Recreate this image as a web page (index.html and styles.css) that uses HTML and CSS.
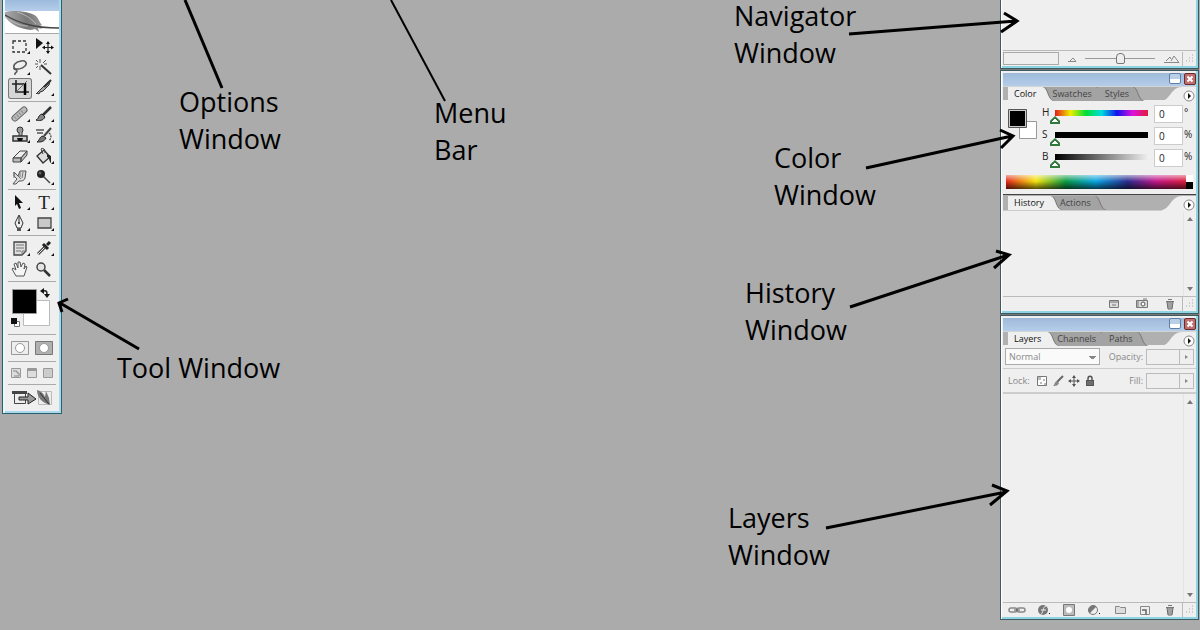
FILE: index.html
```html
<!DOCTYPE html>
<html lang="en">
<head>
<meta charset="utf-8">
<title>Photoshop workspace</title>
<link rel="stylesheet" href="styles.css">
</head>
<body>
<main class="desktop">
  <section class="toolbox" aria-label="Tool window">
    <div class="toolbox-title"></div>
    <svg class="feather" viewBox="0 0 54 22" aria-hidden="true">
      <defs><linearGradient id="fg" x1="0" x2="1"><stop offset="0" stop-color="#aaa"/><stop offset=".6" stop-color="#777"/><stop offset="1" stop-color="#999"/></linearGradient></defs>
      <path d="M0 1C8 -1 24 0 31 5c3 3 3 6 6 9l-2 1 2 3-4-1 1 4-4-3-4 1C16 18 7 15 0 6z" fill="url(#fg)"/>
      <path d="M0 4C14 12 28 17 54 17" fill="none" stroke="#444" stroke-width="1.300"/>
      <path d="M12 1c7 2 14 6 19 12M5 9c6 4 12 6 18 6" fill="none" stroke="#ccc" stroke-width=".7"/>
    </svg>
    <div class="tools">
      <button aria-label="Marquee"><svg viewBox="0 0 24 21"><path d="M5 5h13v11H5z" fill="none" stroke="#333" stroke-width="1.3" stroke-dasharray="3 2"/><path class="k" d="M22 15v3h-3z"/></svg></button>
      <button aria-label="Move"><svg viewBox="0 0 24 21"><path class="k" d="M4 2v11l7-6z"/><path d="M16 6v11M11 11.500h10" stroke="#222" stroke-width="1.200"/><path class="k" d="M16 5l2 3h-4zM16 18l2-3h-4zM10 11.500l3-2v4zM22 11.500l-3-2v4z"/></svg></button>
      <button aria-label="Lasso"><svg viewBox="0 0 24 21"><path d="M7 12c-3-3 0-7 6-8 4-1 7 2 4 5-3 3-8 4-11 2-1 2 3 1 3 3s-3 1-2 4" fill="none" stroke="#555" stroke-width="1.500"/><path class="k" d="M22 15v3h-3z"/></svg></button>
      <button aria-label="Magic wand"><svg viewBox="0 0 24 21"><path d="M9 8l10 9" stroke="#333" stroke-width="2"/><path d="M8 2v4M8 9v4M3 7h3M11 6l3-3M4 3l2 2M4 11l2-2M12 7h3" stroke="#555"/></svg></button>
      <button class="selected" aria-label="Crop"><svg viewBox="0 0 24 21"><path d="M4 6h13v11M8 2v12h13" fill="none" stroke="#222" stroke-width="1.600"/><path d="M17 5v12" stroke="#000" stroke-width="2.500"/><path d="M7 15L19 3" stroke="#666"/></svg></button>
      <button aria-label="Slice"><svg viewBox="0 0 24 21"><path d="M4 16L15 5l3-2-1 4-6 6-3 1-1 2-2-1z" fill="#aaa" stroke="#333"/><path d="M12 9l7-7" stroke="#333" stroke-width="2"/><path class="k" d="M22 15v3h-3z"/></svg></button>
    </div>
    <div class="tools">
      <button aria-label="Healing brush"><svg viewBox="0 0 24 21"><path d="M7 14l9-8" stroke="#666" stroke-width="7" stroke-linecap="round"/><path d="M7 14l9-8" stroke="#bbb" stroke-width="5" stroke-linecap="round"/><path d="M7 14l9-8" stroke="#888" stroke-width="3" stroke-dasharray="1 2"/><path class="k" d="M22 15v3h-3z"/></svg></button>
      <button aria-label="Brush"><svg viewBox="0 0 24 21"><path d="M11 11l8-8" stroke="#333" stroke-width="2.500"/><path d="M4 16c3-1 2-5 6-6l3 3c-2 4-6 4-9 3z" fill="#888" stroke="#222"/><path class="k" d="M22 15v3h-3z"/></svg></button>
      <button aria-label="Clone stamp"><svg viewBox="0 0 24 21"><circle cx="12" cy="5" r="3" fill="#999" stroke="#333"/><path d="M11 7v4h3V7" fill="#aaa" stroke="#444"/><path d="M5 11h14v5H5z" fill="#ccc" stroke="#333" stroke-width="1.500"/><path class="k" d="M9 13h6l-1 3h-4zM22 15v3h-3z"/></svg></button>
      <button aria-label="History brush"><svg viewBox="0 0 24 21"><path d="M12 11l7-8" stroke="#444" stroke-width="2"/><path d="M5 17c3-2 2-5 6-6l3 2c-2 4-5 4-9 4z" fill="#777" stroke="#222"/><path d="M4 5h8M5 8h6" fill="none" stroke="#555" stroke-width="1.300"/><path d="M17 8c3 2 2 6 0 8" fill="none" stroke="#444" stroke-width="1.300" stroke-dasharray="2 1"/><path class="k" d="M22 15v3h-3z"/></svg></button>
      <button aria-label="Eraser"><svg viewBox="0 0 24 21"><path d="M5 12l7-7h7l-6 7z" fill="#eee" stroke="#444"/><path d="M5 12h8v4H5zM13 12l6-7v4l-6 7z" fill="#bbb" stroke="#444"/><path class="k" d="M22 15v3h-3z"/></svg></button>
      <button aria-label="Paint bucket"><svg viewBox="0 0 24 21"><path d="M5 10l7-6 6 7-7 6z" fill="#ddd" stroke="#333" stroke-width="1.300"/><path d="M11 8L9 3c3-2 4 1 4 4" fill="none" stroke="#444"/><path d="M15 8l4 2v7c-2-1-1-5-4-6z" fill="#222"/><path class="k" d="M22 15v3h-3z"/></svg></button>
      <button aria-label="Smudge"><svg viewBox="0 0 24 21"><path d="M5 17l4-5-3-3V5l4 4 2-5h6l-1 7c-1 3-3 3-6 3l-3 3z" fill="#ddd" stroke="#555"/><path d="M10 9l3 3M12 5v5M15 5l-1 6M6 5v6" fill="none" stroke="#777"/><path class="k" d="M22 15v3h-3z"/></svg></button>
      <button aria-label="Burn"><svg viewBox="0 0 24 21"><path d="M10 8l8 8" stroke="#444" stroke-width="1.500"/><circle cx="9" cy="7" r="4" fill="#222"/><circle cx="8" cy="6" r="1.500" fill="#666"/><path class="k" d="M22 15v3h-3z"/></svg></button>
    </div>
    <div class="tools">
      <button aria-label="Path selection"><svg viewBox="0 0 24 21"><path class="k" d="M7 3l8 8h-4l2 5-2 1-2-5-2 2z"/><path class="k" d="M22 15v3h-3z"/></svg></button>
      <button aria-label="Type"><span class="type">T</span><svg class="over" viewBox="0 0 24 21"><path class="k" d="M22 15v3h-3z"/></svg></button>
      <button aria-label="Pen"><svg viewBox="0 0 24 21"><path d="M11 2l4 8-2 5H9l-2-5z" fill="#eee" stroke="#333"/><path d="M11 3v7" stroke="#333"/><circle cx="11" cy="10" r="1" fill="#222"/><path d="M9 15h4v3H9z" fill="#555"/><path class="k" d="M22 15v3h-3z"/></svg></button>
      <button aria-label="Rectangle"><svg viewBox="0 0 24 21"><path d="M6 5h13v10H6z" fill="#c9c9c9" stroke="#444" stroke-width="1.300"/><path class="k" d="M22 15v3h-3z"/></svg></button>
    </div>
    <div class="tools">
      <button aria-label="Notes"><svg viewBox="0 0 24 21"><path d="M6 4h12v9l-4 4H6z" fill="#ddd" stroke="#444" stroke-width="1.300"/><path d="M8 7h8M8 10h8M8 13h5M14 17v-4h4" fill="none" stroke="#777"/><path class="k" d="M22 15v3h-3z"/></svg></button>
      <button aria-label="Eyedropper"><svg viewBox="0 0 24 21"><path d="M6 16l8-8" stroke="#444" stroke-width="3"/><path d="M6 16l8-8" stroke="#eee"/><path d="M11 6l5 5M15 7l3-3" stroke="#222" stroke-width="3"/><path class="k" d="M22 15v3h-3z"/></svg></button>
      <button aria-label="Hand"><svg viewBox="0 0 24 21"><path d="M8 17l-4-7 1-1 3 2-2-6 2-1 2 5V3h2l1 5 2-4 2 1-1 5 2-3 1 1-3 9z" fill="#f5f5f5" stroke="#555"/></svg></button>
      <button aria-label="Zoom"><svg viewBox="0 0 24 21"><path d="M12 11l6 6" stroke="#333" stroke-width="2.500"/><circle cx="9" cy="8" r="4" fill="#e4e4e4" stroke="#444" stroke-width="1.500"/></svg></button>
    </div>
    <div class="swatch-group">
      <svg viewBox="0 0 48 48" aria-label="Foreground and background colours"><path d="M15.500 14.500h26v25h-26z" fill="#fff" stroke="#bbb"/><path d="M4.500 3.500h24v24h-24z" fill="#000" stroke="#999"/><path d="M35 5c4-1 4 1 4 4" fill="none" stroke="#222" stroke-width="1.500"/><path class="k" d="M32 5l4-3v6zM36 8h6l-3 4z"/><path d="M6.500 35.500h5v5h-5z" fill="#fff" stroke="#777"/><path class="k" d="M3 32h6v6H3z"/></svg>
    </div>
    <div class="modes">
      <button aria-label="Standard mode"><svg viewBox="0 0 18 14"><path d="M.5.5h17v13H.5z" fill="#eee" stroke="#999"/><circle cx="9" cy="7" r="4.500" fill="#fff" stroke="#999"/></svg></button>
      <button aria-label="Quick mask mode"><svg viewBox="0 0 18 14"><path d="M.5.5h17v13H.5z" fill="#b0b0b0" stroke="#777"/><circle cx="9" cy="7" r="4.500" fill="#fff" stroke="#999"/></svg></button>
    </div>
    <div class="screens">
      <button aria-label="Standard screen"><svg viewBox="0 0 12 12"><path d="M1.500 1.500h9v9h-9z" fill="#ddd" stroke="#999"/><path d="M3 4h4v2h2v3H4" fill="none" stroke="#888"/></svg></button>
      <button aria-label="Full screen with menu"><svg viewBox="0 0 12 12"><path d="M1.500 1.500h9v9h-9z" fill="#ddd" stroke="#999"/><path d="M1 3h10" stroke="#999" stroke-width="2"/></svg></button>
      <button aria-label="Full screen"><svg viewBox="0 0 12 12"><path d="M1.500 1.500h9v9h-9z" fill="#ccc" stroke="#999"/></svg></button>
    </div>
    <div class="jump">
      <button aria-label="Edit in ImageReady"><svg viewBox="0 0 42 18"><path d="M3.500 4.500h11v10h-11z" fill="#eee" stroke="#444"/><path d="M1 3.500h15" stroke="#444" stroke-width="3"/><path d="M8 8h9V4l8 6-8 5v-4H8z" fill="#999" stroke="#222"/><path d="M27.500 2.500h13v13h-13z" fill="#eee" stroke="#bbb"/><path d="M26 1c4 1 7 4 8 7l1-6 3 7 1 7c-8-2-13-8-13-15z" fill="#777"/><path d="M29 4l9 11" stroke="#333"/></svg></button>
    </div>
  </section>

  <div class="dock">
    <section class="window navigator" aria-label="Navigator">
      <div class="blank"></div>
      <div class="nav-footer">
        <input class="zoom-value" type="text" aria-label="Zoom percentage">
        <svg class="mount" viewBox="0 0 10 6"><path d="M1 5.500h8L6 2 3 5" fill="none" stroke="#888"/></svg>
        <input class="zoom-range" type="range" value="50" aria-label="Zoom">
        <svg class="mount-big" viewBox="0 0 17 8"><path d="M1 7.500h15L11 1 8 6M3 6l4-4 1 2" fill="none" stroke="#888"/></svg>
        <span class="grip"><svg viewBox="0 0 12 12"><path class="dots" d="M9 3h2M6 6h2M9 6h2M3 9h2M6 9h2M9 9h2"/></svg></span>
      </div>
    </section>

    <section class="window" aria-label="Color and history">
      <div class="titlebar"><button class="min" aria-label="Minimize"></button><button class="close" aria-label="Close"><svg viewBox="0 0 10 10"><path d="M2.500 2.500l5 5M7.500 2.500l-5 5" stroke="#fff" stroke-width="2"/></svg></button></div>
      <div class="tabs">
        <button class="tab active">Color<svg viewBox="0 0 12 14"><path d="M0 0c6 0 5 13 12 14H0z"/></svg></button>
        <button class="tab">Swatches<svg viewBox="0 0 12 14"><path d="M0 0c6 0 5 13 12 14H0z"/></svg></button>
        <button class="tab">Styles<svg viewBox="0 0 12 14"><path d="M0 0c6 0 5 13 12 14H0z"/></svg></button>
        <button class="menu" aria-label="Panel menu"><svg viewBox="0 0 34 16"><path d="M0 14C8 13 9 0 20 0h14v16H0z" fill="#efefef"/><circle cx="27" cy="9" r="5" fill="#fff" stroke="#888"/><path class="k" d="M26 6l3 3-3 3z"/></svg></button>
      </div>
      <div class="color-body">
        <svg class="color-chips" viewBox="0 0 30 32"><path d="M11.500 12.500h17v17h-17z" fill="#fff" stroke="#999"/><path d="M.5.5h18v18H.5z" fill="#ccc" stroke="#555"/><path d="M2 2h15v15H2z"/></svg>
        <div class="channels">
          <label for="h">H</label><input class="hue" type="range" value="0" aria-label="Hue slider"><input id="h" class="num" type="text" value="0"><span>°</span>
          <label for="s">S</label><input class="sat" type="range" value="0" aria-label="Saturation slider"><input id="s" class="num" type="text" value="0"><span>%</span>
          <label for="b">B</label><input class="bri" type="range" value="0" aria-label="Brightness slider"><input id="b" class="num" type="text" value="0"><span>%</span>
        </div>
        <div class="ramp"><i></i></div>
      </div>
      <div class="tabs history-tabs">
        <button class="tab active">History<svg viewBox="0 0 12 14"><path d="M0 0c6 0 5 13 12 14H0z"/></svg></button>
        <button class="tab">Actions<svg viewBox="0 0 12 14"><path d="M0 0c6 0 5 13 12 14H0z"/></svg></button>
        <button class="menu" aria-label="Panel menu"><svg viewBox="0 0 34 16"><path d="M0 14C8 13 9 0 20 0h14v16H0z" fill="#efefef"/><circle cx="27" cy="9" r="5" fill="#fff" stroke="#888"/><path class="k" d="M26 6l3 3-3 3z"/></svg></button>
      </div>
      <div class="list history-list"><div class="scroll"><i class="up"></i><i class="down"></i></div></div>
      <div class="footer history-footer">
        <button aria-label="New document from state"><svg viewBox="0 0 14 12"><path d="M2.500 2.500h9v7h-9z" fill="#ddd" stroke="#777"/><path d="M3 4h8M5 7h4" stroke="#777"/></svg></button>
        <button aria-label="New snapshot"><svg viewBox="0 0 14 12"><path d="M1.500 2.500h11v7h-11z" fill="#ddd" stroke="#777"/><circle cx="8" cy="6" r="2" fill="#fff" stroke="#555"/><path d="M3 2v7M8 1h4" stroke="#777"/></svg></button>
        <button aria-label="Delete"><svg viewBox="0 0 14 12"><path d="M4 4h6l-1 7H5z" fill="#ccc" stroke="#666"/><path d="M3 3.500h8M5 1.500h4M6 5v5M8 5v5" stroke="#777"/></svg></button>
        <span class="grip"><svg viewBox="0 0 12 12"><path class="dots" d="M9 3h2M6 6h2M9 6h2M3 9h2M6 9h2M9 9h2"/></svg></span>
      </div>
    </section>

    <section class="window layers" aria-label="Layers">
      <div class="titlebar"><button class="min" aria-label="Minimize"></button><button class="close" aria-label="Close"><svg viewBox="0 0 10 10"><path d="M2.500 2.500l5 5M7.500 2.500l-5 5" stroke="#fff" stroke-width="2"/></svg></button></div>
      <div class="tabs">
        <button class="tab active">Layers<svg viewBox="0 0 12 14"><path d="M0 0c6 0 5 13 12 14H0z"/></svg></button>
        <button class="tab">Channels<svg viewBox="0 0 12 14"><path d="M0 0c6 0 5 13 12 14H0z"/></svg></button>
        <button class="tab">Paths<svg viewBox="0 0 12 14"><path d="M0 0c6 0 5 13 12 14H0z"/></svg></button>
        <button class="menu" aria-label="Panel menu"><svg viewBox="0 0 34 16"><path d="M0 14C8 13 9 0 20 0h14v16H0z" fill="#efefef"/><circle cx="27" cy="9" r="5" fill="#fff" stroke="#888"/><path class="k" d="M26 6l3 3-3 3z"/></svg></button>
      </div>
      <div class="row">
        <select aria-label="Blend mode"><option>Normal</option></select>
        <label class="end" for="op">Opacity:</label>
        <span class="spin"><input id="op" type="text"><button aria-label="Opacity slider"></button></span>
      </div>
      <div class="row">
        <span class="lock">Lock:</span>
        <span class="locks">
          <button aria-label="Lock transparency"><svg viewBox="0 0 12 12"><path d="M1.500 1.500h9v9h-9z" fill="#fff" stroke="#777"/><path d="M2 2h3v3H2zM7 4h2v2H7zM4 7h2v2H4zM8 8h2v2H8z" fill="#bbb"/></svg></button>
          <button aria-label="Lock pixels"><svg viewBox="0 0 12 12"><path d="M5 7l6-6" stroke="#666" stroke-width="2"/><path d="M1 11c2-1 1-4 4-5l2 2c-1 3-4 3-6 3z" fill="#888"/></svg></button>
          <button aria-label="Lock position"><svg viewBox="0 0 12 12"><path d="M6 1v10M1 6h10" stroke="#555"/><path d="M6 0l2 3H4zM6 12l2-3H4zM0 6l3-2v4zM12 6L9 4v4z" fill="#555"/></svg></button>
          <button aria-label="Lock all"><svg viewBox="0 0 12 12"><path d="M4 5V3.500c0-3 4-3 4 0V5" fill="none" stroke="#555" stroke-width="1.500"/><path d="M2 5h8v6H2z" fill="#555"/><path d="M3 7h6M3 9h6" stroke="#888"/></svg></button>
        </span>
        <label class="end" for="fi">Fill:</label>
        <span class="spin"><input id="fi" type="text"><button aria-label="Fill slider"></button></span>
      </div>
      <div class="list"><div class="scroll"><i class="up"></i><i class="down"></i></div></div>
      <div class="footer layers-footer">
        <button aria-label="Link layers"><svg class="wide" viewBox="0 0 18 12"><rect x="1" y="4" width="8" height="4" rx="2" fill="none" stroke="#888" stroke-width="1.500"/><rect x="9" y="4" width="8" height="4" rx="2" fill="none" stroke="#888" stroke-width="1.500"/><path d="M6 6h6" stroke="#555"/></svg></button>
        <button aria-label="Layer style"><svg viewBox="0 0 14 12"><circle cx="6" cy="6" r="5" fill="#777"/><path d="M4 10c2 0 2-8 5-8M4 6h5" fill="none" stroke="#eee"/><path class="k" d="M12 9h1v1h-1z"/></svg></button>
        <button aria-label="Layer mask"><svg viewBox="0 0 14 12"><path d="M1.500.5h11v11h-11z" fill="#bbb" stroke="#777"/><circle cx="7" cy="6" r="3" fill="#fff"/></svg></button>
        <button aria-label="Adjustment layer"><svg viewBox="0 0 14 12"><circle cx="6" cy="6" r="4.500" fill="#eee" stroke="#777"/><path d="M2.500 9.500a5 5 0 0 1 7-7z" fill="#777"/><path class="k" d="M12 9h1v1h-1z"/></svg></button>
        <button aria-label="New group"><svg viewBox="0 0 14 12"><path d="M2.500 2.500h4l1 1h5v6h-10z" fill="#ddd" stroke="#888"/></svg></button>
        <button aria-label="New layer"><svg viewBox="0 0 14 12"><path d="M2.500 2.500h9v8h-9z" fill="#eee" stroke="#888"/><path d="M4 6h4v5" fill="none" stroke="#666" stroke-width="1.500"/></svg></button>
        <button aria-label="Delete layer"><svg viewBox="0 0 14 12"><path d="M4 4h6l-1 7H5z" fill="#ccc" stroke="#666"/><path d="M3 3.500h8M5 1.500h4M6 5v5M8 5v5" stroke="#777"/></svg></button>
        <span class="grip"><svg viewBox="0 0 12 12"><path class="dots" d="M9 3h2M6 6h2M9 6h2M3 9h2M6 9h2M9 9h2"/></svg></span>
      </div>
    </section>
  </div>

  <div class="notes notes-left">
    <svg width="520" height="380"><path d="M185 0L222 88"/><path class="thin" d="M391 0L445 101"/><path d="M139 349L60 303M68 299l-9 4 3 9"/></svg>
    <p class="note options">Options<br>Window</p>
    <p class="note menubar">Menu<br>Bar</p>
    <p class="note tool">Tool Window</p>
  </div>
  <div class="notes notes-right">
    <svg width="500" height="560"><path d="M149 34L316 21M304 13l13 8-16 11"/><path d="M166 168L312 136M300 130l13 6-12 12"/><path d="M150 307L308 255M296 251l13 4-15 13"/><path d="M126 528L306 492M292 485l15 6-17 14"/></svg>
    <p class="note nav">Navigator<br>Window</p>
    <p class="note color">Color<br>Window</p>
    <p class="note history">History<br>Window</p>
    <p class="note layer">Layers<br>Window</p>
  </div>
</main>
</body>
</html>
```
FILE: styles.css
```css
* { box-sizing: border-box; }
body { margin: 0; background: #ababab; }
button, input, select { font: inherit; color: inherit; margin: 0; padding: 0; border: 0; border-radius: 0; background: none; min-width: 0; outline: 0; }
button svg { display: block; }
.k { fill: #111; }

.desktop { position: relative; height: 100vh; overflow: hidden; font: 10px/14px "Open Sans", "Noto Sans", sans-serif; color: #222; }

/* Tool window */
.toolbox { position: absolute; left: 2px; top: 0; width: 60px; background: #efefef; border: solid #27606e; border-width: 0 1px 1px; box-shadow: inset 2px 0 #eaf5fb, inset -2px 0 #a8d8ea, inset 0 -2px #a8d8ea; padding: 0 2px 2px; }
.toolbox-title { height: 11px; background: linear-gradient(#9dbbdd, #b5cdea); }
.feather { display: block; width: 100%; height: 22px; background: #fff; }
.tools { display: grid; grid-template-columns: 24px 24px; justify-content: center; padding: 2px 0 1px; margin: 0 3px; border-top: 1px solid #aaa; }
.feather + .tools { margin: 0; padding-bottom: 2px; }
.tools button { position: relative; height: 21px; }
.tools svg { width: 24px; height: 21px; }
.tools .selected { background: #d6d6d6; border-radius: 3px; box-shadow: inset 0 0 0 1px #777; }
.type { display: block; font: 19px/20px "Liberation Serif", serif; }
.tools .over { position: absolute; left: 0; top: 0; }
.swatch-group { margin: 0 3px; border-top: 1px solid #aaa; padding: 4px 0 0; }
.swatch-group svg { display: block; width: 48px; height: 48px; }
.modes, .screens, .jump { display: flex; justify-content: center; align-items: center; margin: 0 3px; border-top: 1px solid #aaa; }
.modes { height: 27px; gap: 6px; }
.modes svg { width: 18px; height: 14px; }
.screens { height: 23px; gap: 4px; }
.screens svg { width: 12px; height: 12px; }
.jump { height: 27px; }
.jump svg { width: 42px; height: 18px; }

/* Panel dock */
.dock { position: absolute; right: 1px; top: 0; bottom: 10px; width: 199px; display: flex; flex-direction: column; gap: 1px; background: #777; }
.window { display: flex; flex-direction: column; background: #efefef; border: 1px solid #3e5a62; box-shadow: inset 1px 0 #fff, inset -2px 0 #8ed4e2, inset 0 -2px #8ed4e2; padding: 2px 2px 2px; }
.navigator { border-top: 0; padding-top: 0; }
.layers { flex: 1; }
.blank { height: 51px; border-bottom: 1px solid #bbb; }
.nav-footer { display: flex; align-items: center; height: 15px; }
.zoom-value { width: 56px; height: 13px; border: 1px solid #aaa; }
.mount { width: 10px; height: 6px; margin-left: 8px; }
.mount-big { width: 17px; height: 8px; margin-right: 2px; }
.zoom-range { appearance: none; flex: 1; height: 13px; margin: 0 8px; background: linear-gradient(#999, #999) center / 100% 1px no-repeat; }
.zoom-range::-webkit-slider-thumb { appearance: none; width: 9px; height: 11px; background: #eee; border: 1px solid #777; border-radius: 4px 4px 2px 2px; }
.grip { width: 14px; height: 14px; border-left: 1px solid #bbb; }
.grip svg { display: block; width: 12px; height: 12px; }
.dots { stroke: #aaa; stroke-dasharray: 1 2; }

.titlebar { display: flex; justify-content: flex-end; align-items: flex-start; gap: 3px; height: 13px; background: linear-gradient(#9fb9da, #b4cdea); }
.min { width: 12px; height: 11px; border: 1px solid #5f7fa5; border-radius: 2px; background: linear-gradient(#b9cfe8 50%, #fff 50%); }
.close { width: 12px; height: 12px; border: 1px solid #6e2a2a; border-radius: 2px; background: #bd6f6f; }
.close svg { width: 10px; height: 10px; }

.tabs { display: flex; height: 14px; padding-left: 5px; background: #b0b0b0; border-top: 1px solid #d4d4d4; }
.tab { position: relative; height: 14px; padding: 0 15px 0 7px; margin-right: -9px; color: #444; font-size: 9px; line-height: 14px; white-space: nowrap; background: linear-gradient(#a3a3a3, #a3a3a3) left / calc(100% - 12px) 100% no-repeat; }
.tab svg { position: absolute; right: 0; top: 0; width: 12px; height: 14px; fill: #a3a3a3; filter: drop-shadow(1px 0 #777); }
.tab.active { z-index: 1; padding: 0 18px 0 6px; color: #111; background: linear-gradient(#efefef, #efefef) left / calc(100% - 12px) 100% no-repeat; }
.tab.active svg { fill: #efefef; }
.menu { margin-left: auto; width: 34px; height: 16px; z-index: 1; }
.menu svg { width: 34px; height: 16px; }

.color-body { display: grid; grid-template-columns: 30px 1fr; column-gap: 4px; padding: 5px 3px 5px; }
.color-chips { width: 30px; height: 32px; margin: 4px 0 0 2px; }
.channels { display: grid; grid-template-columns: 7px 1fr 29px 9px; grid-auto-rows: 20px; row-gap: 2px; column-gap: 1px; padding-left: 2px; align-items: start; }
.channels label, .channels span { line-height: 14px; }
.channels input[type="range"] { appearance: none; width: 100%; height: 14px; margin-top: 5px; background-repeat: no-repeat; background-position: center top; background-size: calc(100% - 10px) 6px; }
.channels input[type="range"]::-webkit-slider-thumb { appearance: none; width: 10px; height: 8px; margin-top: 6px; background: conic-gradient(from 130deg at 50% 2px, transparent 0 10deg, #fff 10deg 90deg, transparent 0) center top / 6px 6px no-repeat #2f7a3a; clip-path: polygon(50% 0, 100% 60%, 100% 100%, 0 100%, 0 60%); }
.hue { background-image: linear-gradient(90deg, #e21b1b, #ee0, #0d3, #0dd, #11e, #d1d, #e21b3b); }
.sat { background-image: linear-gradient(#000, #000); }
.bri { background-image: linear-gradient(90deg, #000, #777 50%, #eee); }
.num { height: 18px; background: #fff; border: 1px solid #ccc; padding-left: 4px; }
.ramp { grid-column: 1 / -1; height: 14px; margin-top: 6px; display: flex; justify-content: flex-end; background: linear-gradient(rgb(255 255 255 / 60%), transparent 45%, rgb(0 0 0 / 65%)), linear-gradient(90deg, #e4261c, #f6e40d 16%, #0a9b46 32%, #0aa6e4 48%, #2c2d8f 65%, #c2188b 80%, #e3202b); }
.ramp i { width: 7px; background: linear-gradient(#fff 50%, #000 50%); }
.history-tabs { border-top: 1px solid #444; height: 16px; padding-top: 1px; }

.list { flex: 1; display: flex; justify-content: flex-end; border-top: 1px solid #ccc; }
.history-list { flex: none; height: 86px; }
.scroll { display: flex; flex-direction: column; justify-content: space-between; width: 13px; padding: 6px 3px 5px; border-left: 1px solid #e4e4e4; }
.scroll i { border: solid transparent; border-width: 0 3px; }
.scroll .up { border-bottom: 4px solid #777; }
.scroll .down { border-top: 4px solid #777; }
.footer { display: flex; justify-content: flex-end; align-items: center; height: 15px; border-top: 1px solid #bbb; }
.footer svg { width: 14px; height: 12px; }
.history-footer button { margin-right: 14px; }
.history-footer button:nth-of-type(3) { margin-right: 5px; }
.layers-footer { padding-left: 5px; }
.layers-footer button { margin-right: auto; }
.layers-footer button:nth-of-type(7) { margin-right: 5px; }
.footer .wide { width: 18px; }
.footer .grip svg { width: 12px; }

.row { display: flex; align-items: center; height: 24px; padding: 0 2px; border-bottom: 1px solid #ccc; color: #888; font-size: 9px; }
.row select { appearance: none; width: 95px; height: 17px; padding-left: 3px; border: 1px solid #aaa; background: linear-gradient(#888, #888) 85px 9px / 3px 1px no-repeat, linear-gradient(#888, #888) 84px 8px / 5px 1px no-repeat, linear-gradient(#888, #888) 83px 7px / 7px 1px no-repeat, #fafafa; }
.end { margin-left: auto; padding-right: 3px; }
.spin { display: flex; width: 48px; height: 16px; border: 1px solid #bbb; }
.spin input { flex: 1; }
.spin button { display: grid; place-items: center; width: 14px; border-left: 1px solid #bbb; }
.spin button::after { content: ""; border: solid transparent; border-width: 2px 0 2px 3px; border-left-color: #888; }
.lock { padding-left: 3px; }
.locks { display: flex; gap: 4px; margin-left: 6px; }
.locks svg { width: 12px; height: 12px; }

/* Annotations */
.notes { position: absolute; top: 0; pointer-events: none; }
.notes-left { left: 0; width: 520px; }
.notes-right { right: 0; width: 500px; }
.notes svg { display: block; fill: none; stroke: #000; stroke-width: 3; }
.notes .thin { stroke-width: 2; }
.note { position: absolute; margin: 0; font-size: 27px; line-height: 37px; color: #000; white-space: nowrap; }
.options { left: 179px; top: 83px; }
.menubar { left: 434px; top: 94px; }
.tool { left: 117px; top: 349px; }
.nav { left: 34px; top: -3px; }
.color { left: 74px; top: 139px; }
.history { left: 45px; top: 274px; }
.layer { left: 28px; top: 499px; }
```
